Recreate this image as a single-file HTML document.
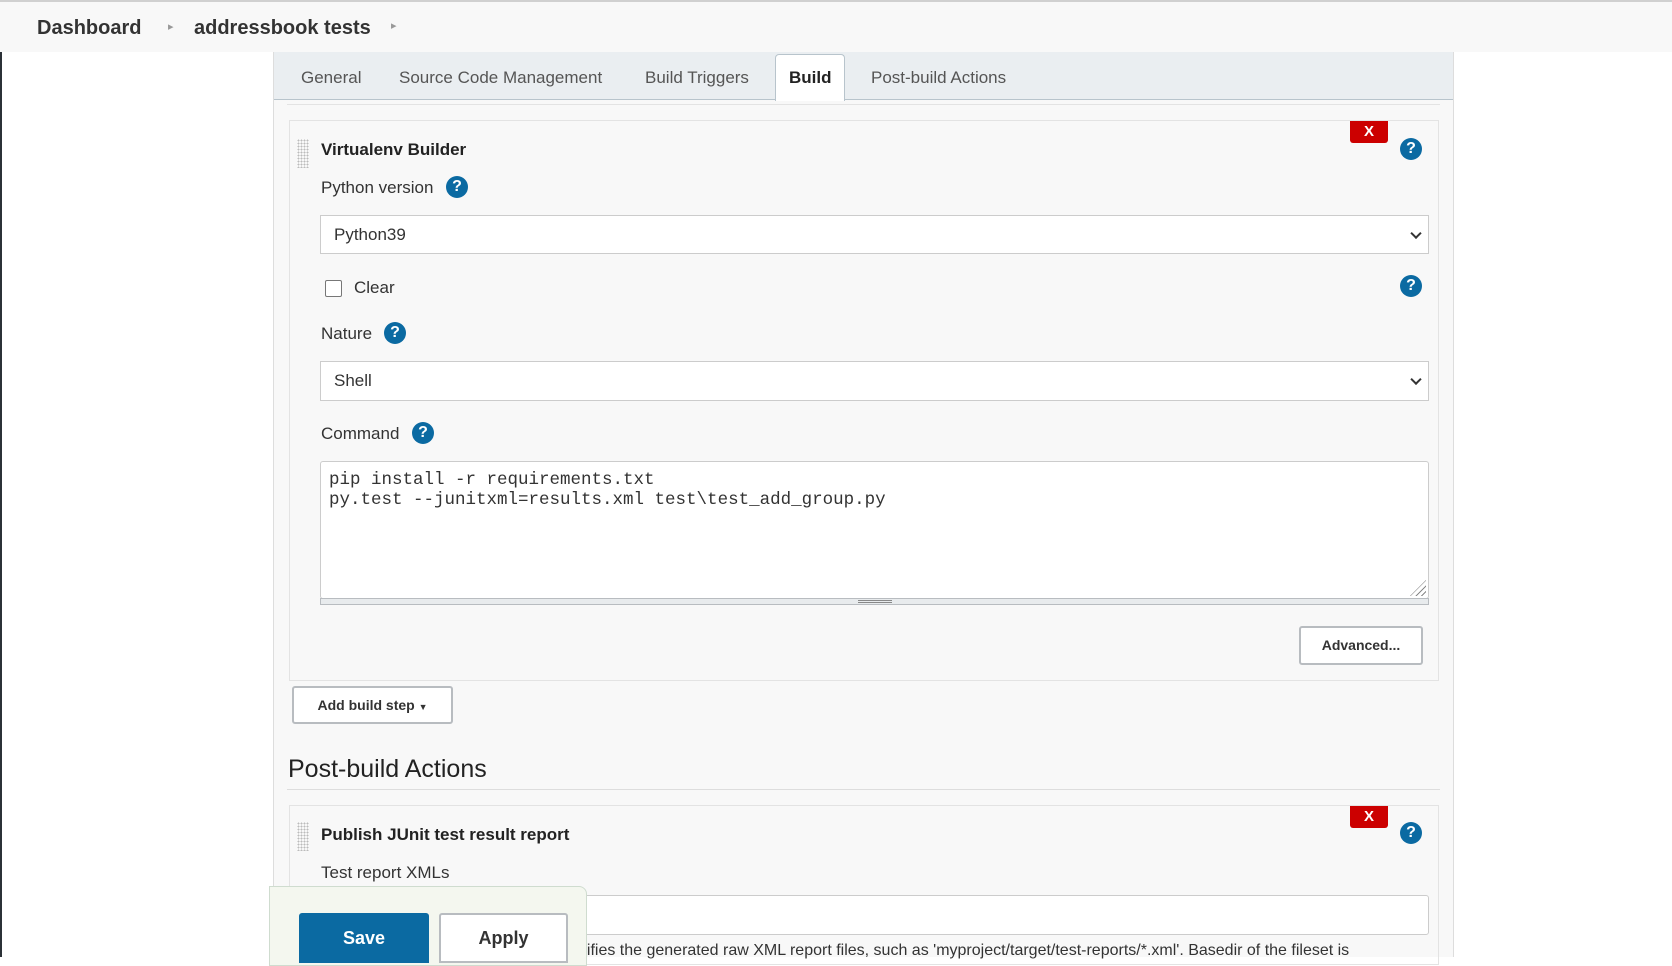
<!DOCTYPE html>
<html><head><meta charset="utf-8"><style>
*{box-sizing:border-box;margin:0;padding:0}
body{width:1672px;height:957px;overflow:hidden;background:#fff;font-family:"Liberation Sans",sans-serif;color:#333;position:relative}
.a{position:absolute}
.help{position:absolute;width:22px;height:22px;border-radius:50%;background:#0b6aa2;color:#fff;font:bold 16px/22px "Liberation Sans",sans-serif;text-align:center}
.xb{position:absolute;width:38px;height:22px;background:#cc0000;color:#fff;font:bold 15px/22px "Liberation Sans",sans-serif;text-align:center;border-radius:0 0 3px 3px}
.lbl{position:absolute;font-size:17px;color:#333}
.sel{position:absolute;left:320px;width:1109px;background:#fff;border:1px solid #ccc;font-size:17px;padding-left:13px}
.chev{position:absolute;right:8px;top:50%;width:8px;height:8px;border-right:2px solid #333;border-bottom:2px solid #333;transform:translateY(-70%) rotate(45deg)}
.btn{position:absolute;background:#fff;border:2px solid #b8bcc0;border-radius:3px;font-weight:bold;font-size:14px;text-align:center;color:#333}
.grip{position:absolute;width:12px;background-image:radial-gradient(#bbb 0.8px,transparent 0.9px);background-size:3px 3px}
</style></head><body>
<div class="a" style="left:0;top:0;width:1672px;height:2px;background:#d0d0d0"></div>
<div class="a" style="left:0;top:2px;width:1672px;height:50px;background:#f8f8f8"></div>
<div class="a" style="left:0;top:52px;width:2px;height:905px;background:#2b3137"></div>
<div class="a" style="left:37px;top:17px;font-weight:bold;font-size:20px;color:#333">Dashboard</div>
<div class="a" style="left:168px;top:20px;font-size:11px;color:#999">&#9656;</div>
<div class="a" style="left:194px;top:17px;font-weight:bold;font-size:20px;color:#333">addressbook tests</div>
<div class="a" style="left:391px;top:19px;font-size:11px;color:#999">&#9656;</div>

<div class="a" style="left:273px;top:52px;width:1181px;height:905px;background:#f8f8f8;border-left:1px solid #ddd;border-right:1px solid #ddd"></div>
<div class="a" style="left:274px;top:52px;width:1179px;height:48px;background:#eaeef1;border-bottom:1px solid #b8c4cc"></div>
<div class="a" style="left:301px;top:68px;font-size:17px;color:#555">General</div>
<div class="a" style="left:399px;top:68px;font-size:17px;color:#555">Source Code Management</div>
<div class="a" style="left:645px;top:68px;font-size:17px;color:#555">Build Triggers</div>
<div class="a" style="left:775px;top:54px;width:70px;height:47px;background:#fff;border:1px solid #b8c4cc;border-bottom:none;border-radius:4px 4px 0 0"></div>
<div class="a" style="left:789px;top:68px;font-size:17px;font-weight:bold;color:#222">Build</div>
<div class="a" style="left:871px;top:68px;font-size:17px;color:#555">Post-build Actions</div>
<div class="a" style="left:287px;top:104px;width:1153px;height:1px;background:#e3e3e3"></div>

<div class="a" style="left:289px;top:120px;width:1150px;height:561px;border:1px solid #e3e3e3"></div>
<div class="grip" style="left:297px;top:139px;height:29px"></div>
<div class="a" style="left:321px;top:140px;font-weight:bold;font-size:17px;color:#222">Virtualenv Builder</div>
<div class="xb" style="left:1350px;top:121px">X</div>
<div class="help" style="left:1400px;top:138px">?</div>
<div class="lbl" style="left:321px;top:178px">Python version</div>
<div class="help" style="left:446px;top:176px">?</div>
<div class="sel" style="top:215px;height:39px;line-height:37px">Python39<span class="chev"></span></div>
<div class="a" style="left:325px;top:280px;width:17px;height:17px;border:1.5px solid #777;border-radius:2px;background:#fff"></div>
<div class="lbl" style="left:354px;top:278px">Clear</div>
<div class="help" style="left:1400px;top:275px">?</div>
<div class="lbl" style="left:321px;top:324px">Nature</div>
<div class="help" style="left:384px;top:322px">?</div>
<div class="sel" style="top:361px;height:40px;line-height:38px">Shell<span class="chev"></span></div>
<div class="lbl" style="left:321px;top:424px">Command</div>
<div class="help" style="left:412px;top:422px">?</div>
<div class="a" style="left:320px;top:461px;width:1109px;height:138px;background:#fff;border:1px solid #ccc;border-radius:3px;font-family:'Liberation Mono',monospace;font-size:17.5px;line-height:20px;padding:8px 8px;color:#333;white-space:pre">pip install -r requirements.txt
py.test --junitxml=results.xml test\test_add_group.py</div>
<div class="a" style="left:1410px;top:580px;width:16px;height:16px;background:repeating-linear-gradient(135deg,transparent 0 3px,#888 3px 4px);clip-path:polygon(100% 0,100% 100%,0 100%)"></div>
<div class="a" style="left:320px;top:598px;width:1109px;height:7px;background:#e8ebed;border:1px solid #b8bcc0"></div>
<div class="a" style="left:858px;top:600px;width:34px;height:3px;border-top:1px solid #888;border-bottom:1px solid #888"></div>
<div class="btn" style="left:1299px;top:626px;width:124px;height:39px;line-height:35px">Advanced...</div>
<div class="btn" style="left:292px;top:686px;width:161px;height:38px;line-height:34px">Add build step <span style="font-size:9px">&#9660;</span></div>

<div class="a" style="left:288px;top:755px;font-size:25px;color:#222">Post-build Actions</div>
<div class="a" style="left:287px;top:789px;width:1153px;height:1px;background:#ddd"></div>
<div class="a" style="left:289px;top:805px;width:1150px;height:160px;border:1px solid #e3e3e3"></div>
<div class="grip" style="left:297px;top:822px;height:29px"></div>
<div class="a" style="left:321px;top:825px;font-weight:bold;font-size:17px;color:#222">Publish JUnit test result report</div>
<div class="xb" style="left:1350px;top:806px">X</div>
<div class="help" style="left:1400px;top:822px">?</div>
<div class="lbl" style="left:321px;top:863px">Test report XMLs</div>
<div class="a" style="left:320px;top:895px;width:1109px;height:40px;background:#fff;border:1px solid #ccc;border-radius:3px"></div>
<div class="a" style="left:570px;top:942px;font-size:16px;color:#333;white-space:nowrap">ecifies the generated raw XML report files, such as 'myproject/target/test-reports/*.xml'. Basedir of the fileset is</div>

<div class="a" style="left:269px;top:886px;width:318px;height:80px;background:#f4f7ef;border:1px solid #cfdccf;border-radius:0 8px 0 0"></div>
<div class="a" style="left:299px;top:913px;width:130px;height:50px;background:#0b6aa2;color:#fff;font-weight:bold;font-size:18px;text-align:center;line-height:50px;border-radius:3px 3px 0 0">Save</div>
<div class="a" style="left:439px;top:913px;width:129px;height:50px;background:#fff;border:2px solid #b8bcc0;color:#333;font-weight:bold;font-size:18px;text-align:center;line-height:46px;border-radius:3px 3px 0 0">Apply</div>
</body></html>
